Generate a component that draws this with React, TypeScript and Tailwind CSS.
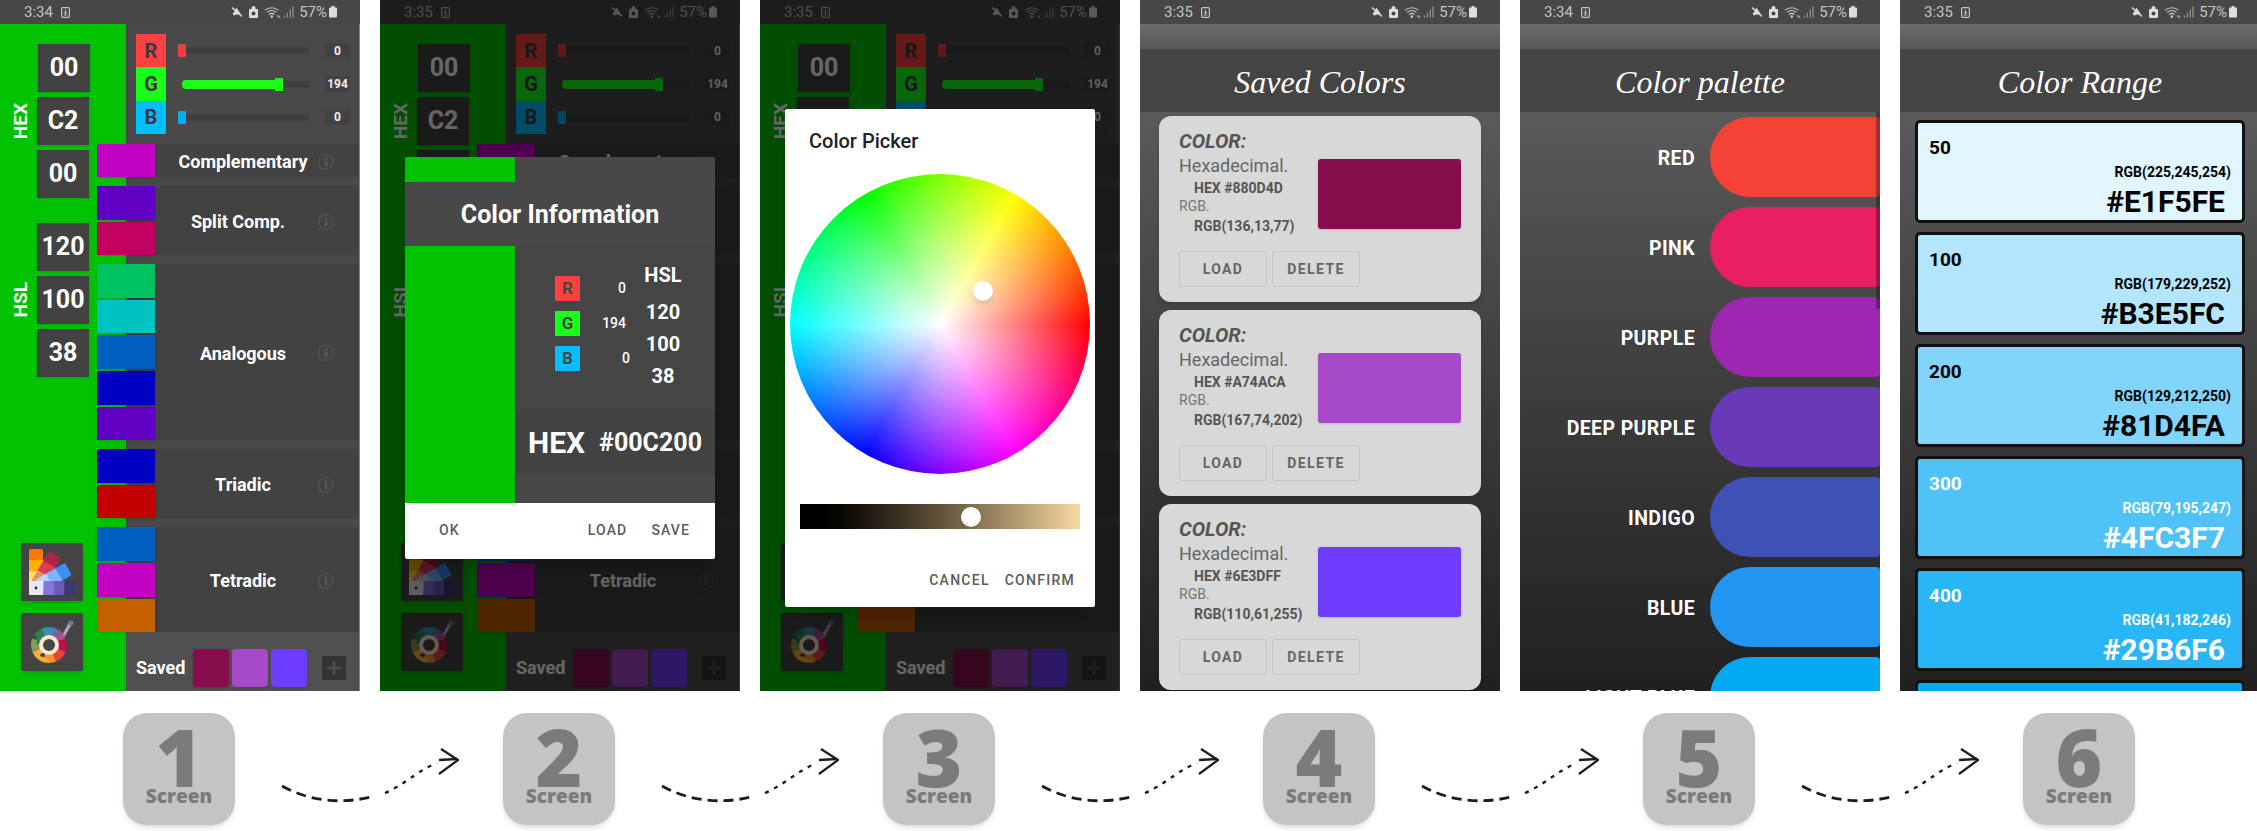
import React from 'react'
import { Plus } from 'lucide-react'

const SWATCH_ROWS = [
  { label: 'Complementary', height: 'h-[33px]', colors: ['#C200C2'] },
  { label: 'Split Comp.', height: 'h-[69px]', colors: ['#6000C2', '#C20060'], shift: true },
  { label: 'Analogous', height: 'h-[176px]', colors: ['#00C260', '#00C2C2', '#0060C2', '#0000C2', '#6000C2'] },
  { label: 'Triadic', height: 'h-[69px]', colors: ['#0000C2', '#C20000'] },
  { label: 'Tetradic', height: 'h-[105px]', colors: ['#0060C2', '#C200C2', '#C26000'] },
]

const CHANNELS = [
  { name: 'R', value: 0, block: 'bg-[#ff4040]', bar: 'bg-[#ef4040]' },
  { name: 'G', value: 194, block: 'bg-[#19ff19]', bar: 'bg-[#19ff19]' },
  { name: 'B', value: 0, block: 'bg-[#00bfff]', bar: 'bg-[#00b0f0]' },
]

const SAVED = [
  { hex: '#880D4D', rgb: 'RGB(136,13,77)' },
  { hex: '#A74ACA', rgb: 'RGB(167,74,202)' },
  { hex: '#6E3DFF', rgb: 'RGB(110,61,255)' },
]

const PALETTE = [
  { name: 'RED', color: '#F44336' },
  { name: 'PINK', color: '#E91E63' },
  { name: 'PURPLE', color: '#9C27B0' },
  { name: 'DEEP PURPLE', color: '#673AB7' },
  { name: 'INDIGO', color: '#3F51B5' },
  { name: 'BLUE', color: '#2196F3' },
  { name: 'LIGHT BLUE', color: '#03A9F4' },
]

const RANGE = [
  { step: '50', rgb: 'RGB(225,245,254)', hex: '#E1F5FE', text: 'text-black' },
  { step: '100', rgb: 'RGB(179,229,252)', hex: '#B3E5FC', text: 'text-black' },
  { step: '200', rgb: 'RGB(129,212,250)', hex: '#81D4FA', text: 'text-black' },
  { step: '300', rgb: 'RGB(79,195,247)', hex: '#4FC3F7', text: 'text-white' },
  { step: '400', rgb: 'RGB(41,182,246)', hex: '#29B6F6', text: 'text-white' },
  { step: '500', rgb: 'RGB(3,169,244)', hex: '#03A9F4', text: 'text-white' },
]

function StatusBar({ time }: { time: string }) {
  return (
    <div className="h-6 shrink-0 flex items-center pl-6 pr-[23px] bg-[#474747] text-[#c4c4c4] text-[15px]">
      <span className="w-[37px]">{time}</span>
      <svg width="9" height="11" viewBox="0 0 9 11" fill="none">
        <rect x="0.6" y="0.6" width="7.8" height="9.8" rx="1.2" stroke="#c4c4c4" strokeWidth="1.2" />
        <path d="M4.5 2.5v4M2.8 5l1.7 1.8L6.2 5M2.8 8h3.4" stroke="#c4c4c4" strokeWidth="1" />
      </svg>
      <svg className="ml-auto" width="12" height="12" viewBox="0 0 12 12">
        <path d="M1.5 4.5h2L8 2v8L3.5 7.5h-2z" fill="#ddd" transform="rotate(-35 6 6)" />
        <path d="M1 1.5l10 9" stroke="#ddd" strokeWidth="1.6" />
      </svg>
      <svg className="ml-[6px]" width="9" height="12" viewBox="0 0 9 12">
        <path d="M2.5 3V2a2 2 0 0 1 4 0v1H8a1 1 0 0 1 1 1v7a1 1 0 0 1-1 1H1a1 1 0 0 1-1-1V4a1 1 0 0 1 1-1z" fill="#ddd" />
        <circle cx="4.5" cy="7.5" r="2" fill="#474747" />
      </svg>
      <svg className="ml-[6px]" width="17" height="12" viewBox="0 0 17 12" fill="none" stroke="#c8c8c8" strokeWidth="1.1">
        <path d="M1 4.2a10.5 10.5 0 0 1 13.5 0M3 6.4a7.4 7.4 0 0 1 9.5 0M5 8.5a4.2 4.2 0 0 1 5.5 0" />
        <circle cx="7.8" cy="10.6" r="0.8" fill="#c8c8c8" />
        <path d="M14 9v2.5M15.6 10.2v1.3" />
      </svg>
      <svg className="ml-[3px]" width="10" height="12" viewBox="0 0 10 12" fill="#9a9a9a">
        <rect x="0" y="9.5" width="1.2" height="2" />
        <rect x="2.8" y="7" width="1.2" height="4.5" />
        <rect x="5.6" y="3.5" width="1.2" height="8" />
        <rect x="8.4" y="0.5" width="1.2" height="11" />
      </svg>
      <span className="ml-[5px]">57%</span>
      <svg className="ml-[2px]" width="8" height="12" viewBox="0 0 8 12" fill="#ddd">
        <rect x="2.5" y="0" width="3" height="2" />
        <rect x="0" y="1.5" width="8" height="10" rx="1" />
      </svg>
    </div>
  )
}

function InfoBubble() {
  return (
    <svg width="16" height="16" viewBox="0 0 16 16" fill="none" className="shrink-0 -ml-[13px] mt-[2px]">
      <path d="M8 .7a7.2 7.2 0 0 1 0 14.4H1.2l1.4-2.2A7.2 7.2 0 0 1 8 .7z" stroke="#595959" strokeWidth="1" />
      <circle cx="8" cy="4.6" r="1.3" fill="#595959" />
      <rect x="6.6" y="6.8" width="2.8" height="5.8" rx="1.2" fill="#595959" />
    </svg>
  )
}

function FanIcon() {
  const blades = [
    { angle: 0, colors: ['#ff7a00', '#ffb000', '#ffe060'] },
    { angle: 30, colors: ['#a8274a', '#d83c5c', '#f08a60'] },
    { angle: 60, colors: ['#3f8ef5', '#7cb5f8', '#b8d8fb'] },
  ]
  return (
    <svg width="62" height="58" viewBox="0 0 62 58">
      {blades.map((blade) => (
        <g key={blade.angle} transform={`rotate(${blade.angle} 14 44)`}>
          {blade.colors.map((c, i) => (
            <rect key={c} x="8" y={6 + i * 11} width="14" height="12" fill={c} rx={i === 0 ? 2 : 0} />
          ))}
        </g>
      ))}
      <rect x="8" y="38" width="14.5" height="14" fill="#e8e8f4" />
      <rect x="22.5" y="38" width="10.5" height="14" fill="#8577d8" />
      <rect x="33" y="38" width="10.5" height="14" fill="#6a5ab8" />
      <rect x="43.5" y="38" width="10.5" height="14" rx="2" fill="#3f3872" />
      <circle cx="15" cy="45" r="1.4" fill="#223" />
    </svg>
  )
}

function WheelIcon() {
  const segments = ['#8d5aa0', '#b8124a', '#e8413c', '#f79230', '#fbb03b', '#8a9a50', '#2e7d5b', '#3c8fb0']
  return (
    <svg width="62" height="58" viewBox="0 0 62 58" fill="none">
      <g transform="rotate(-68 28 32)">
        {segments.map((c, i) => (
          <circle
            key={c}
            cx="28"
            cy="32"
            r="13.5"
            stroke={c}
            strokeWidth="9"
            pathLength={8}
            strokeDasharray="1 7"
            strokeDashoffset={-i}
          />
        ))}
      </g>
      <circle cx="28" cy="32" r="8" stroke="#fbe6d0" strokeWidth="4" fill="#444" />
      <path d="M41 25l8-14" stroke="#c0507a" strokeWidth="4" strokeLinecap="round" />
      <path d="M43 22l6-11" stroke="#8ac6e8" strokeWidth="2" />
      <circle cx="50" cy="10" r="2.6" fill="#6a7a88" />
    </svg>
  )
}

function ValueBox({ value, nudge }: { value: string; nudge?: boolean }) {
  return (
    <div className={`h-12 w-[52px] flex items-center justify-center bg-[#424242] text-white text-[25px] font-bold shadow-sm ${nudge ? 'ml-px' : ''}`}>
      {value}
    </div>
  )
}

function SideGroup({ label, values, nudge }: { label: string; values: string[]; nudge?: boolean }) {
  return (
    <div className="flex">
      <div className="w-[37px] pl-[3px] flex items-center justify-center">
        <span className="[writing-mode:vertical-rl] rotate-180 text-white font-bold text-[19px] leading-none">{label}</span>
      </div>
      <div className="flex flex-col gap-[5px]">
        {values.map((v, i) => (
          <ValueBox key={i} value={v} nudge={nudge && i === 0} />
        ))}
      </div>
    </div>
  )
}

function ChannelRow({ channel }: { channel: (typeof CHANNELS)[number] }) {
  const width = (channel.value / 255) * 127 + 4
  return (
    <div className="flex items-center h-[33.4px]">
      <div className={`w-[30px] h-full flex items-center justify-center text-[#3a3a3a] text-[20px] font-bold ${channel.block}`}>
        {channel.name}
      </div>
      <div className="relative ml-4 w-[127px] h-[7px] bg-[#3f3f3f]">
        {channel.value > 0 && (
          <div className={`absolute left-0 -top-px h-[9px] rounded-l-sm ${channel.bar}`} style={{ width }} />
        )}
        <div className={`absolute -top-[3px] w-2 h-[13px] rounded-[1px] ${channel.bar}`} style={{ left: width - 8 }} />
      </div>
      <div className="ml-4 w-[25px] h-4 flex items-center justify-center bg-[#424242] text-[#eee] text-[12px] font-bold">
        {channel.value}
      </div>
    </div>
  )
}

function MainScreen({ time }: { time: string }) {
  return (
    <>
      <StatusBar time={time} />
      <div className="flex flex-1 min-h-0">
        <div className="w-[126px] shrink-0 bg-[#00c200] flex flex-col pt-5">
          <SideGroup label="HEX" values={['00', 'C2', '00']} nudge />
          <div className="mt-[25px]">
            <SideGroup label="HSL" values={['120', '100', '38']} />
          </div>
          <div className="mt-auto pb-5 pl-[21px] flex flex-col gap-3">
            <div className="w-[62px] h-[58px] bg-[#444] shadow-md rounded-[2px]">
              <FanIcon />
            </div>
            <div className="w-[62px] h-[58px] bg-[#444] shadow-md rounded-[2px]">
              <WheelIcon />
            </div>
          </div>
        </div>
        <div className="flex-1 flex flex-col bg-[#494949] border-r border-[#858585]">
          <div className="pt-[10px] pl-[10px] pb-[10px]">
            {CHANNELS.map((c) => (
              <ChannelRow key={c.name} channel={c} />
            ))}
          </div>
          <div className="flex flex-col gap-[9px]">
            {SWATCH_ROWS.map((row) => (
              <div key={row.label} className={`flex items-center bg-[#424242] ${row.height}`}>
                <div className="-ml-[29px] w-[58px] h-full shrink-0 flex flex-col gap-[2px]">
                  {row.colors.map((c, i) => (
                    <div key={i} className="flex-1 shadow-sm" style={{ backgroundColor: c }} />
                  ))}
                </div>
                <div className={`w-[176px] shrink-0 pt-[2px] text-center text-white text-[18px] font-bold whitespace-nowrap ${row.shift ? 'pr-[10px]' : ''}`}>
                  {row.label}
                </div>
                <InfoBubble />
              </div>
            ))}
          </div>
          <div className="flex-1 flex items-center bg-[#505050] pl-[10px] pt-3">
            <span className="text-white font-bold text-[18px] w-[57px]">Saved</span>
            {SAVED.map((s) => (
              <div key={s.hex} className="w-9 h-[38px] mr-[3px] rounded shadow-sm" style={{ backgroundColor: s.hex }} />
            ))}
            <div className="ml-3 w-6 h-6 rounded-[2px] bg-[#333] flex items-center justify-center text-[#4f4f4f]">
              <Plus size={20} strokeWidth={3} />
            </div>
          </div>
        </div>
      </div>
    </>
  )
}

function InfoDialog() {
  return (
    <div className="absolute left-[25px] top-[157px] w-[310px] h-[401.5px] flex flex-col rounded-[2px] shadow-xl overflow-hidden">
      <div className="h-[25px] flex bg-[#484848]">
        <div className="w-[110px] bg-[#00c200]" />
      </div>
      <div className="h-16 pt-[2px] flex items-center justify-center bg-[#484848] text-white text-[25px] font-bold">Color Information</div>
      <div className="flex-1 flex bg-[#484848]">
        <div className="w-[110px] bg-[#00c200]" />
        <div className="flex-1 flex flex-col">
          <div className="h-[165px] flex bg-[#454545] pl-10">
            <div className="w-[71px] pt-[30px] flex flex-col gap-[10px]">
              {CHANNELS.map((c, i) => (
                <div key={c.name} className="flex items-center h-[25px] text-white shrink-0">
                  <div className={`w-[25px] h-[25px] shrink-0 flex items-center justify-center text-[#444] font-bold text-[17px] ${c.block}`}>
                    {c.name}
                  </div>
                  <span className={`text-right text-[14px] font-medium shrink-0 ${i === 2 ? 'w-[50px]' : 'w-[46px]'}`}>{c.value}</span>
                </div>
              ))}
            </div>
            <div className="ml-[17px] w-[40px] pt-[17px] flex flex-col items-center text-white font-bold whitespace-nowrap text-[20px] leading-[32px]">
              <span className="leading-6 mb-[9px]">HSL</span>
              <span>120</span>
              <span>100</span>
              <span>38</span>
            </div>
          </div>
          <div className="h-[63px] flex items-center pl-[13px] bg-[#424242] text-white font-bold whitespace-nowrap">
            <span className="text-[30px]">HEX</span>
            <span className="ml-[14px] text-[25px]">#00C200</span>
          </div>
        </div>
      </div>
      <div className="h-[55.5px] shrink-0 flex items-center bg-white pl-[34px] pr-[25px] text-[#5c5c5c] text-[14px] font-medium tracking-[0.08em]">
        <span>OK</span>
        <span className="ml-auto">LOAD</span>
        <span className="ml-[24px]">SAVE</span>
      </div>
    </div>
  )
}

function PickerDialog() {
  return (
    <div className="absolute left-[25px] top-[109px] w-[310px] h-[498px] bg-white rounded-[2px] shadow-xl">
      <div className="pt-5 pl-6 text-[20px] leading-6 font-medium text-[#222]">Color Picker</div>
      <div className="relative mt-[21px] ml-[5px] w-[300px] h-[300px] rounded-full bg-[conic-gradient(from_90deg,#f00,#f0f,#00f,#0ff,#0f0,#ff0,#f00)]">
        <div className="absolute inset-0 rounded-full bg-[radial-gradient(circle_closest-side,#fff,#fff0)]" />
        <div className="absolute left-[183px] top-[107px] w-5 h-5 rounded-full bg-white shadow-md" />
      </div>
      <div className="relative mt-[30px] ml-[15px] w-[280px] h-[25px] bg-gradient-to-r from-black to-[#fad9a0]">
        <div className="absolute left-[161px] top-[2.5px] w-5 h-5 rounded-full bg-white shadow-sm" />
      </div>
      <div className="mt-[41px] pr-5 flex justify-end gap-[15px] text-[#5c5c5c] text-[14px] leading-5 font-medium tracking-[0.09em]">
        <span>CANCEL</span>
        <span>CONFIRM</span>
      </div>
    </div>
  )
}

function ScriptHeader({ time, title }: { time: string; title: string }) {
  return (
    <>
      <StatusBar time={time} />
      <div className="h-[25px] shrink-0 bg-gradient-to-b from-[#6a6a6a] to-[#5a5a5a]" />
      <div className="h-[63px] shrink-0 pt-[2px] flex items-center justify-center bg-[#444] text-white font-['Liberation_Serif',serif] italic text-[32px]">
        {title}
      </div>
    </>
  )
}

function SavedCard({ hex, rgb }: { hex: string; rgb: string }) {
  return (
    <div className="h-[186px] shrink-0 mb-2 rounded-xl bg-[#d8d8d8] shadow-md pl-5 pt-[13px]">
      <div className="flex h-[107px]">
        <div className="w-[139px] text-[#666]">
          <div className="text-[20px] leading-6 font-bold italic text-[#555]">COLOR:</div>
          <div className="mt-[3px] text-[18px] leading-5">Hexadecimal.</div>
          <div className="mt-[2px] pl-[15px] text-[14px] leading-5 font-bold text-[#555]">HEX {hex}</div>
          <div className="-mt-px text-[14px] leading-[18px] text-[#777]">RGB.</div>
          <div className="mt-px pl-[15px] text-[14px] leading-5 font-bold text-[#555] whitespace-nowrap">{rgb}</div>
        </div>
        <div className="mt-[30px] w-[143px] h-[70px] rounded-[3px] shadow-sm" style={{ backgroundColor: hex }} />
      </div>
      <div className="mt-[15px] flex gap-[5px] text-[#666] text-[14px] font-bold tracking-[0.1em]">
        <div className="w-[88px] h-9 flex items-center justify-center border border-[#c4c4c4] rounded-[3px]">LOAD</div>
        <div className="w-[88px] h-9 flex items-center justify-center border border-[#c4c4c4] rounded-[3px]">DELETE</div>
      </div>
    </div>
  )
}

function SavedColors() {
  return (
    <>
      <ScriptHeader time="3:35" title="Saved Colors" />
      <div className="flex-1 min-h-0 flex flex-col pt-1 px-[19px] bg-gradient-to-b from-[#5a5a5a] to-[#202020]">
        {SAVED.map((s) => (
          <SavedCard key={s.hex} hex={s.hex} rgb={s.rgb} />
        ))}
      </div>
    </>
  )
}

function ColorPalette() {
  return (
    <>
      <ScriptHeader time="3:34" title="Color palette" />
      <div className="flex-1 min-h-0 flex flex-col pt-[5px] bg-gradient-to-b from-[#5a5a5a] to-[#202020]">
        {PALETTE.map((p) => (
          <div key={p.name} className="h-20 shrink-0 mb-[10px] flex items-center">
            <div className="w-[175px] pt-[3px] text-right text-white text-[19.5px] font-bold tracking-[0.02em] whitespace-nowrap">{p.name}</div>
            <div className="ml-[15px] w-[170px] h-full rounded-l-[40px] rounded-r-[4px]" style={{ backgroundColor: p.color }} />
          </div>
        ))}
      </div>
      <div className="absolute right-0 top-[112px] w-1 h-[197px] bg-black/30" />
    </>
  )
}

function ColorRange() {
  return (
    <>
      <ScriptHeader time="3:35" title="Color Range" />
      <div className="flex-1 min-h-0 flex flex-col pt-2 px-[15px] bg-gradient-to-b from-[#5a5a5a] to-[#202020]">
        {RANGE.map((r) => (
          <div
            key={r.step}
            className={`h-[103px] shrink-0 mb-[9px] border-[3px] border-[#111] rounded-[5px] ${r.text}`}
            style={{ backgroundColor: r.hex }}
          >
            <div className="pt-[15px] pl-[11px] text-[19px] leading-5 font-bold">{r.step}</div>
            <div className="mt-[6px] pr-[11px] text-right text-[14px] leading-4 font-bold">{r.rgb}</div>
            <div className="mt-[6px] pr-[17px] text-right text-[30px] leading-8 font-bold">{r.hex}</div>
          </div>
        ))}
      </div>
    </>
  )
}

function Screen({ children }: { children: React.ReactNode }) {
  return <div className="relative w-[360px] h-[691px] shrink-0 overflow-hidden flex flex-col bg-[#474747]">{children}</div>
}

function DashedArrow() {
  return (
    <svg width="180" height="60" viewBox="0 0 180 60" fill="none" stroke="#1c1c1c" className="ml-[44px] mt-[34px] shrink-0">
      <path d="M3 39C30 54 62 58 96 49" strokeWidth="2.8" strokeDasharray="10 6" />
      <path d="M106 46C125 38 138 24 158 16" strokeWidth="2.4" strokeDasharray="4 6" />
      <path d="M160 13L178 12" strokeWidth="2.4" />
      <path d="M162 2L179 13L160 27" strokeWidth="2.2" />
    </svg>
  )
}

export default function App() {
  const steps = ['1', '2', '3', '4', '5', '6']
  return (
    <div className="w-[2257px] h-[831px] overflow-hidden bg-white font-['Roboto',sans-serif]">
      <div className="flex gap-5">
        <Screen>
          <MainScreen time="3:34" />
        </Screen>
        <Screen>
          <MainScreen time="3:35" />
          <div className="absolute inset-0 bg-black/60" />
          <InfoDialog />
        </Screen>
        <Screen>
          <MainScreen time="3:35" />
          <div className="absolute inset-0 bg-black/60" />
          <PickerDialog />
        </Screen>
        <Screen>
          <SavedColors />
        </Screen>
        <Screen>
          <ColorPalette />
        </Screen>
        <Screen>
          <ColorRange />
        </Screen>
      </div>
      <div className="flex pl-[123px] pt-[22px]">
        {steps.map((step, i) => (
          <div key={step} className="w-[380px] shrink-0 flex items-start">
            <div className="w-28 h-28 shrink-0 rounded-[24px] bg-[#c4c4c4] shadow-md flex flex-col items-center font-['Open_Sans',sans-serif] text-[#7b7b7b] font-extrabold">
              <span className="mt-px text-[80px] leading-[84px]">{step}</span>
              <span className="-mt-[12px] text-[19px] leading-5">Screen</span>
            </div>
            {i < steps.length - 1 && <DashedArrow />}
          </div>
        ))}
      </div>
    </div>
  )
}
